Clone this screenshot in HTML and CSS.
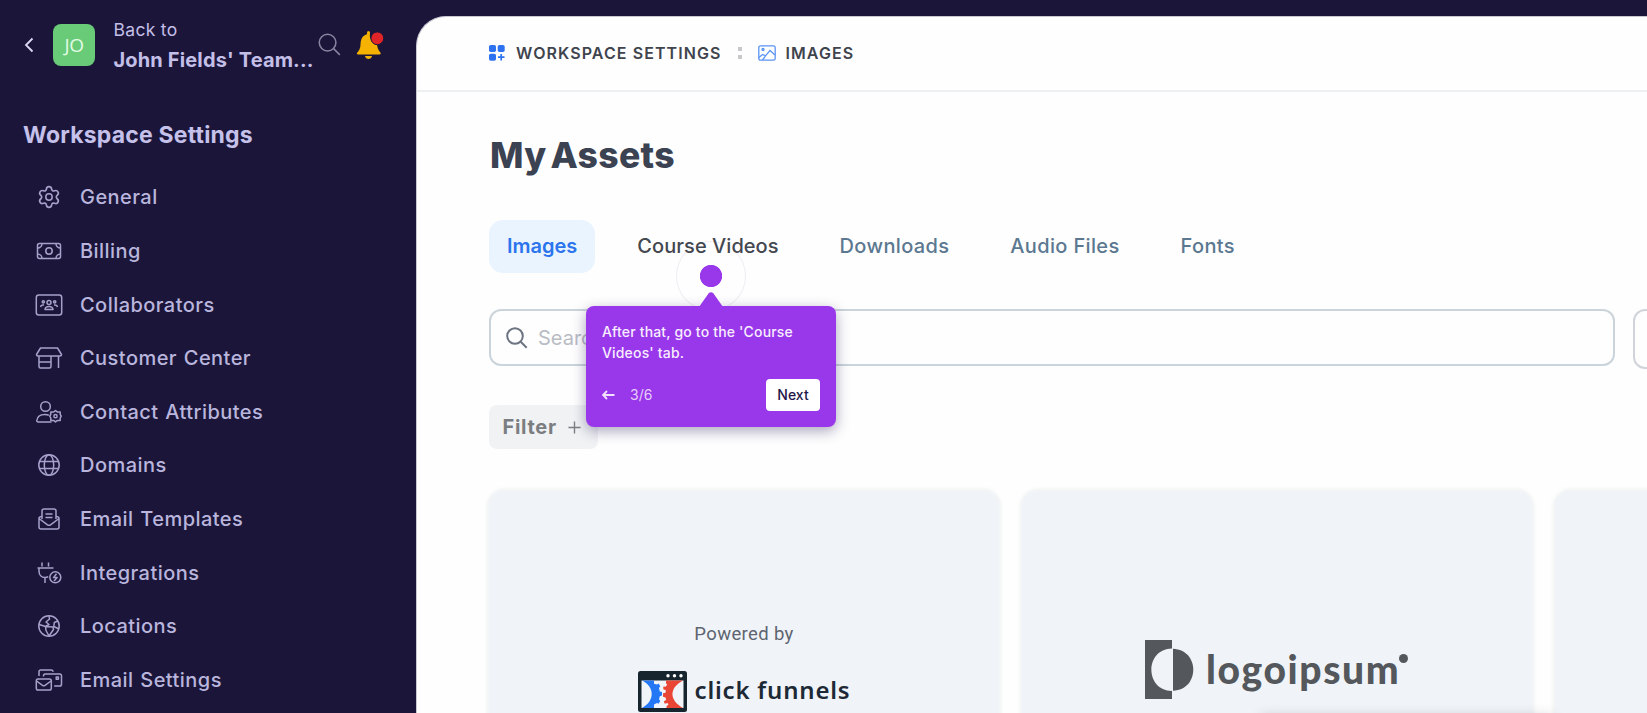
FILE: index.html
```
<!DOCTYPE html>
<html lang="en">
    <head>
        <title>Workspace Settings - Images</title>
        <meta charset="UTF-8">
        <link rel="stylesheet" href="styles.css">
    </head>
    <body>

        <aside class="sidebar">
            <div class="sidebar-top">
                <svg class="icon-back" viewBox="0 0 10 16"><path d="M8.5 1.5 2 8l6.500 6.500"/></svg>
                <div class="avatar">JO</div>
                <div class="team">
                    <span class="team-back">Back to</span>
                    <span class="team-name">John Fields' Team...</span>
                </div>
                <svg class="icon-search-top" viewBox="0 0 24 24"><circle cx="10" cy="10" r="8.700"/><path d="m16.300 16.300 6.500 6.500"/></svg>
                <svg class="icon-bell" viewBox="0 0 28 28">
                    <path class="bell-body" d="M11 1.500a1.500 1.500 0 0 1 3 0v1c-.8 5 1.500 9 7 10.200.2 3.800 1 5.800 3.500 9 .5.700 0 1.800-.900 1.800H2c-.900 0-1.400-1.100-.900-1.800 3.400-3.600 3.200-5.700 3.500-9.700C5 7.500 7 4.300 11 3.200z"/>
                    <path class="bell-body" d="M9 25h7c-.500 4-6.500 4-7 0z"/>
                    <circle class="bell-dot" cx="21.300" cy="7.300" r="6.400"/>
                </svg>
            </div>

            <h2 class="sidebar-title">Workspace Settings</h2>

            <ul class="menu">
                <li>
                    <svg viewBox="0 0 28 28"><path d="M11.600 4.700c.400-3 4.400-3 4.800 0 .100 1.300 1.400 2 2.600 1.500 2.800-1.200 4.800 2.200 2.400 4.100-1 .8-1 2.300 0 3.100 2.400 1.900.4 5.300-2.400 4.100-1.200-.5-2.500.2-2.600 1.500-.4 3-4.400 3-4.800 0-.1-1.300-1.400-2-2.600-1.500-2.800 1.200-4.800-2.200-2.400-4.100 1-.8 1-2.300 0-3.100C4.200 8.400 6.200 5 9 6.200c1.200.5 2.500-.2 2.600-1.500z" transform="translate(-1.400 1) scale(1.100)"/><circle cx="14" cy="14" r="3.200"/></svg>
                    <span>General</span>
                </li>
                <li>
                    <svg viewBox="0 0 28 28"><rect x="2.500" y="6.500" width="23" height="15" rx="2"/><circle cx="14" cy="14" r="3.200"/><path d="M2.500 11a4.500 4.500 0 0 0 4.500-4.500M21 6.500a4.500 4.500 0 0 0 4.500 4.500M2.500 17A4.500 4.500 0 0 1 7 21.500M21 21.500a4.500 4.500 0 0 1 4.500-4.500"/></svg>
                    <span>Billing</span>
                </li>
                <li>
                    <svg viewBox="0 0 28 28"><rect x="1.300" y="4" width="25.400" height="20" rx="2.500"/><circle cx="14" cy="11.500" r="2"/><circle cx="8.300" cy="10.800" r="1.100"/><circle cx="19.700" cy="10.800" r="1.100"/><path d="M10 18.500c.5-4 7.500-4 8 0zM5.500 16c.3-1.500 1.700-2.200 3.500-2M22.500 16c-.3-1.500-1.700-2.200-3.500-2"/></svg>
                    <span>Collaborators</span>
                </li>
                <li>
                    <svg viewBox="0 0 28 28"><path d="M5.500 4h17l4 6.500c0 1-.5 1.500-1.500 1.500H3c-1 0-1.500-.5-1.500-1.500zM4 12v10.500c0 1 .5 1.500 1.500 1.500h9c1 0 1.500-.5 1.500-1.500V12M4 18h12M23.500 12v12"/></svg>
                    <span>Customer Center</span>
                </li>
                <li>
                    <svg viewBox="0 0 28 28"><circle cx="10.500" cy="8.500" r="4.800"/><path d="M16.500 24H3.300c-1 0-1.700-.7-1.500-1.500.5-4 3.700-6 8-6 1.500 0 2.900.2 4 .7"/><path d="m20.500 12.500 2 1.600 2.700-.2 0 2.500 1 1.800-1 1.800 0 2.500-2.700-.1-2 1.500-2-1.500-2.700.1 0-2.500-1-1.800 1-1.800 0-2.500 2.700.2z"/><circle cx="20.500" cy="18.200" r="1.600"/></svg>
                    <span>Contact Attributes</span>
                </li>
                <li>
                    <svg viewBox="0 0 28 28"><circle cx="14" cy="14" r="10.200"/><ellipse cx="14" cy="14" rx="4.700" ry="10.200"/><path d="M4.500 10.500h19M4.500 17.500h19"/></svg>
                    <span>Domains</span>
                </li>
                <li>
                    <svg viewBox="0 0 28 28"><path d="M7 14V6c0-1.300.7-2 2-2h10c1.300 0 2 .7 2 2v8M10.500 9h7M10.500 12.500h7"/><path d="M7 11.500c-2 0-3 .7-3 2V22c0 1.300.7 2 2 2h16c1.300 0 2-.7 2-2v-8.500c0-1.300-1-2-3-2M4 13.500l8.500 6.300c1 .7 2 .7 3 0l8.500-6.300"/></svg>
                    <span>Email Templates</span>
                </li>
                <li>
                    <svg viewBox="0 0 28 28"><path d="M7 3.500v4M13.500 3.500v4M2.500 9h16M4 9v3c0 4 2.500 6.500 6 6.500 1.200 0 2.300-.3 3.200-.9M10 18.500V24"/><circle cx="20.300" cy="18.300" r="5.500"/><path d="m21.500 14.800-3 3.800h3.600l-3 3.500"/></svg>
                    <span>Integrations</span>
                </li>
                <li>
                    <svg viewBox="0 0 28 28"><circle cx="14" cy="14" r="10.200"/><path d="M14 4l.5 3-3.500 3 3 2.500-3.500 2L4 12.500M10.500 14.500l7.500.5.500 2.500L14 24l-3-5.500zM22.800 9l-3.500 1.500-.5 4L24 17"/></svg>
                    <span>Locations</span>
                </li>
                <li>
                    <svg viewBox="0 0 28 28"><rect x="1.300" y="13" width="15" height="11" rx="1.800"/><path d="m1.500 15 6 4.300c.8.500 1.700.5 2.500 0l6-4.300M4 10V5.800C4 4.700 4.700 4 5.800 4h10.400c1 0 1.800.7 1.800 1.800M8.500 10.500V9.800c0-1 .7-1.800 1.800-1.800h14.400c1 0 1.800.7 1.800 1.800v8.400c0 1-.8 1.800-1.800 1.800h-5.500"/><rect x="21.200" y="11" width="2.200" height="2.200"/></svg>
                    <span>Email Settings</span>
                </li>
            </ul>
        </aside>

        <main class="panel">
            <nav class="breadcrumb">
                <svg class="crumb-icon" viewBox="0 0 18 18">
                    <g fill="#2d72f0"><rect x="1" y="1" width="7" height="7" rx="1.800"/><rect x="9.700" y="1" width="7" height="7" rx="1.800"/><rect x="1" y="9.700" width="7" height="7" rx="1.800"/></g>
                    <path d="M13.200 10v6.500M10 13.200h6.500" stroke="#2d72f0" stroke-width="1.700"/>
                </svg>
                <span class="crumb">Workspace Settings</span>
                <span class="crumb-separator"></span>
                <svg class="crumb-image" viewBox="0 0 18 16"><rect x=".8" y=".8" width="16.400" height="14.400" rx="1.800"/><circle cx="5" cy="4.500" r="1"/><path d="m1 12.500 3.500-3 3 1.300L12 5.500l5 4.500M4.500 15l3-4.200"/></svg>
                <span class="crumb">Images</span>
            </nav>

            <section class="content">
                <h1 class="title">My Assets</h1>

                <div class="tabs">
                    <a class="tab tab-active">Images</a>
                    <a class="tab tab-hover">Course Videos</a>
                    <a class="tab">Downloads</a>
                    <a class="tab">Audio Files</a>
                    <a class="tab">Fonts</a>
                </div>

                <div class="search-row">
                    <div class="search">
                        <svg viewBox="0 0 22 22"><circle cx="9" cy="9" r="7.800"/><path d="m14.700 14.700 6 6"/></svg>
                        <span class="placeholder">Search</span>
                    </div>
                    <div class="sort"></div>
                </div>

                <button type="button" class="filter"><span>Filter</span>
                    <svg viewBox="0 0 14 14"><path d="M7 .500v13M.500 7h13"/></svg>
                </button>

                <div class="cards">
                    <div class="card card-funnels">
                        <span class="powered">Powered by</span>
                        <div class="funnels-logo">
                            <svg viewBox="0 0 49 41">
                                <rect width="49" height="41" rx="2.500" fill="#17262e"/>
                                <path fill="#f1f4f9" d="M3.500 9.500h42V37h-42z"/>
                                <g fill="#fff"><circle cx="30" cy="4.800" r="1.700"/><circle cx="36.500" cy="4.800" r="1.700"/><circle cx="43" cy="4.800" r="1.700"/></g>
                                <path fill="#2478f5" d="M4 9.500h12v3.300l3 .7 1.500-1 1.800 2.700-1.300 1.700.8 3.500 2.200.6v3.600l-2.200.6-.8 3 1.300 1.800-1.800 2.700-1.500-.7-3 1.500V37H4C17 30 17 16 4 9.500z"/>
                                <path fill="#ea4635" d="M45 9.500H28v2.800l1.200 1.500-1.700 2-2.200-.3v2.800l2.600 1-.4 2.400-2.500.5v3.500l2.500.7.7 2.500-2.400 1.300 1 2.500 2.700-.6 1 1.500-2 1.700V37H45C31 29 31 17 45 9.500z"/>
                            </svg>
                            <span class="funnels-name">click funnels</span>
                        </div>
                    </div>
                    <div class="card card-ipsum">
                        <div class="ipsum-logo">
                            <svg viewBox="0 0 49 59">
                                <path d="M0 0h27v8.500C-.5 9-.5 50.500 27 51v8H0z"/><path d="M28 8.800c27 1 27 41 0 42z"/>
                            </svg>
                            <span class="ipsum-name">logoipsum</span>
                            <i class="ipsum-dot"></i>
                        </div>
                    </div>
                    <div class="card"></div>
                </div>
            </section>

            <div class="toast-shadow"></div>
        </main>

        <!-- guided tour step -->
        <div class="tour-ring"></div>
        <div class="tour">
            <svg class="tour-arrow" viewBox="0 0 24 15"><path d="M0 15 9.500 1.500Q12-1 14.500 1.500L24 15z"/></svg>
            <p class="tour-text">After that, go to the 'Course<br>Videos' tab.</p>
            <div class="tour-actions">
                <svg class="tour-back" viewBox="0 0 13 10"><path d="M12.500 5H1M5 1 1 5l4 4"/></svg>
                <span class="tour-step">3/6</span>
                <button type="button" class="tour-next">Next</button>
            </div>
        </div>

    </body>
</html>
```
FILE: styles.css
```
*{
    box-sizing: border-box;
}

body{
    margin: 0;
    height: 713px;
    overflow: hidden;
    display: flex;
    background-color: #1b1639;
    font-family: Inter, "Liberation Sans", sans-serif;
}

h1, h2, p, ul{
    margin: 0;
    padding: 0;
}

svg{
    display: block;
    flex: none;
}

/* sidebar */
.sidebar{
    width: 416px;
    flex: none;
    color: #c3bfe8;
}

.sidebar-top{
    display: flex;
    align-items: center;
    height: 90px;
    padding-left: 24px;
}

.icon-back{
    width: 10px;
    height: 16px;
    fill: none;
    stroke: #dcd9f5;
    stroke-width: 1.8;
}

.avatar{
    display: flex;
    justify-content: center;
    align-items: center;
    width: 42px;
    height: 42px;
    margin-left: 19px;
    border-radius: 8px;
    background-color: #69cb78;
    color: #e2fbe4;
    font-family: "Open Sans", sans-serif;
    font-size: 19px;
    letter-spacing: -0.5px;
}

.team{
    display: flex;
    flex-direction: column;
    width: 204px;
    margin-left: 18.5px;
    white-space: nowrap;
}

.team-back{
    font-size: 17.5px;
    line-height: 30px;
    letter-spacing: 0.3px;
}

.team-name{
    font-size: 20px;
    font-weight: 650;
    line-height: 30px;
    letter-spacing: 0.15px;
}

.icon-search-top{
    width: 23px;
    height: 23px;
    margin-bottom: 1px;
    fill: none;
    stroke: #88839f;
    stroke-width: 1.6;
}

.icon-bell{
    width: 28px;
    height: 28px;
    margin-left: 15px;
}

.bell-body{
    fill: #f5b200;
}

.bell-dot{
    fill: #e02528;
    stroke: #1b1639;
    stroke-width: 1;
}

.sidebar-title{
    padding-left: 23px;
    margin-top: 29px;
    font-size: 23px;
    font-weight: 650;
    line-height: 32px;
    letter-spacing: 0.2px;
    color: #c5c1ea;
}

.menu{
    margin-top: 19.5px;
    list-style: none;
}

.menu li{
    display: flex;
    align-items: center;
    height: 53.64px;
    padding-left: 34.5px;
    font-size: 20px;
    font-weight: 500;
    letter-spacing: 0.45px;
    word-spacing: 1px;
    color: #b9b5dd;
}

.menu svg{
    width: 28px;
    height: 28px;
    margin-right: 17.5px;
    fill: none;
    stroke: #a5a1ca;
    stroke-width: 1.5;
    stroke-linejoin: round;
}

/* white panel */
.panel{
    position: relative;
    flex: 1;
    min-width: 0;
    height: 698px;
    margin-top: 15.5px;
    overflow: hidden;
    border-left: 1px solid #c9c8d2;
    border-top: 1px solid #c9c8d2;
    border-top-left-radius: 30px;
    background-color: #fefefe;
}

.breadcrumb{
    display: flex;
    align-items: center;
    height: 75.5px;
    padding: 0 0 1px 71px;
    border-bottom: 2px solid #ecf0f1;
}

.crumb-icon{
    width: 18px;
    height: 18px;
    margin-right: 10px;
}

.crumb{
    font-size: 16px;
    font-weight: 600;
    letter-spacing: 1.08px;
    text-transform: uppercase;
    color: #40444d;
}

.crumb-separator{
    width: 4px;
    height: 12px;
    margin: 0 16px 0 17px;
    border-top: 4px solid #c8c8ca;
    border-bottom: 4px solid #c8c8ca;
}

.crumb-image{
    width: 18px;
    height: 16px;
    margin-right: 9px;
    fill: none;
    stroke: #5b93f5;
    stroke-width: 1.3;
}

.content{
    padding-left: 72px;
}

.title{
    margin: 41.5px 0 0 1px;
    font-size: 35.5px;
    font-weight: 800;
    line-height: 44px;
    letter-spacing: 0.3px;
    word-spacing: -4px;
    color: #3b4252;
}

.tabs{
    display: flex;
    gap: 23px;
    margin-top: 42.5px;
}

.tab{
    height: 53px;
    padding: 0 19px;
    border-radius: 14px;
    font-size: 20px;
    font-weight: 500;
    line-height: 53px;
    letter-spacing: 0.35px;
    color: #5b7890;
    white-space: nowrap;
}

.tab-active{
    background-color: #eaf4ff;
    padding: 0 18px;
    font-weight: 600;
    letter-spacing: 0;
    color: #2b74ee;
}

.tab-hover{
    letter-spacing: 0.05px;
    color: #43474f;
}

.search-row{
    display: flex;
    gap: 18px;
    width: 1300px;
    margin-top: 36px;
}

.search{
    display: flex;
    align-items: center;
    width: 1126px;
    height: 57px;
    padding-left: 15px;
    border: 2px solid #cad4da;
    border-radius: 12px;
}

.search svg{
    width: 22px;
    height: 22px;
    fill: none;
    stroke: #6b7480;
    stroke-width: 2;
}

.placeholder{
    margin: 1px 0 0 10px;
    font-size: 20px;
    color: #b9bcc4;
}

.sort{
    flex: 1;
    height: 60px;
    border: 2px solid #d0d4da;
    border-radius: 12px;
}

.filter{
    display: flex;
    align-items: center;
    gap: 11px;
    width: 109px;
    height: 44px;
    margin-top: 36px;
    padding: 0 0 0 13.5px;
    border: none;
    border-radius: 8px;
    background-color: #f0f2f4;
    font-family: inherit;
    font-size: 20px;
    font-weight: 650;
    letter-spacing: 0.7px;
    color: #7b7e81;
}

.filter svg{
    width: 13px;
    height: 13px;
    stroke: #7b7e81;
    stroke-width: 1.5;
}

.cards{
    display: flex;
    gap: 19px;
    margin: 39.5px 0 0 -2px;
}

.card{
    display: flex;
    flex: none;
    width: 514px;
    height: 300px;
    border: 2px solid #f3f5f6;
    border-radius: 18px;
    background-color: #f0f4f8;
    box-shadow: 0 0 4px #f1f3f3;
}

.card-funnels{
    flex-direction: column;
    align-items: center;
    padding-top: 130px;
}

.powered{
    font-family: Roboto, sans-serif;
    font-size: 18.5px;
    line-height: 26px;
    letter-spacing: 0.35px;
    color: #5d6470;
}

.funnels-logo{
    display: flex;
    align-items: center;
    gap: 8px;
    margin-top: 24px;
}

.funnels-logo svg{
    width: 49px;
    height: 41px;
}

.funnels-name{
    margin-top: -2px;
    font-family: "Noto Sans", sans-serif;
    font-size: 24px;
    font-weight: 600;
    line-height: 36px;
    letter-spacing: 0.8px;
    color: #1d2a35;
    white-space: nowrap;
}

.card-ipsum{
    padding: 149px 0 0 123px;
}

.ipsum-logo{
    display: flex;
    height: 59px;
    color: #54585c;
}

.ipsum-logo svg{
    width: 49px;
    height: 59px;
    fill: #54585c;
}

.ipsum-name{
    margin-left: 12px;
    font-family: Lato, sans-serif;
    font-size: 39px;
    font-weight: 900;
    line-height: 59px;
    letter-spacing: 1.6px;
}

.ipsum-dot{
    width: 9px;
    height: 9px;
    margin: 14px 0 0 -1px;
    border-radius: 50%;
    background-color: #54585c;
}

.toast-shadow{
    position: absolute;
    left: 845px;
    bottom: -9px;
    width: 290px;
    height: 6px;
    border-radius: 8px;
    box-shadow: 0 0 12px 2px rgba(60, 70, 90, 0.2);
}

/* guided tour */
.tour-ring{
    position: absolute;
    left: 676px;
    top: 241px;
    width: 70px;
    height: 70px;
    border: 1px solid rgba(120, 80, 150, 0.1);
    border-radius: 50%;
    background: radial-gradient(circle, #9937ea 10.7px, rgba(255, 255, 255, 0) 11.5px);
}

.tour{
    position: absolute;
    left: 586px;
    top: 306px;
    width: 250px;
    height: 121px;
    padding: 15px 16px 16px;
    border-radius: 8px;
    background-color: #9937ea;
    box-shadow: 0 4px 14px rgba(40, 30, 90, 0.4);
    color: #f8edff;
}

.tour-arrow{
    position: absolute;
    left: 113px;
    top: -14px;
    width: 24px;
    height: 15px;
    fill: #9937ea;
}

.tour-text{
    font-size: 14px;
    font-weight: 500;
    line-height: 21px;
    letter-spacing: 0.17px;
    white-space: nowrap;
}

.tour-actions{
    display: flex;
    align-items: center;
    margin-top: 16px;
}

.tour-back{
    width: 13px;
    height: 10px;
    fill: none;
    stroke: #f3e2ff;
    stroke-width: 1.8;
}

.tour-step{
    margin: -1px 0 0 15px;
    font-size: 14px;
    color: #e6cdfb;
}

.tour-next{
    width: 54px;
    height: 32px;
    margin-left: auto;
    padding: 0 0 1px;
    border: none;
    border-radius: 4px;
    background-color: #fff;
    font-family: inherit;
    font-size: 14px;
    font-weight: 500;
    color: #1f1748;
}
```
